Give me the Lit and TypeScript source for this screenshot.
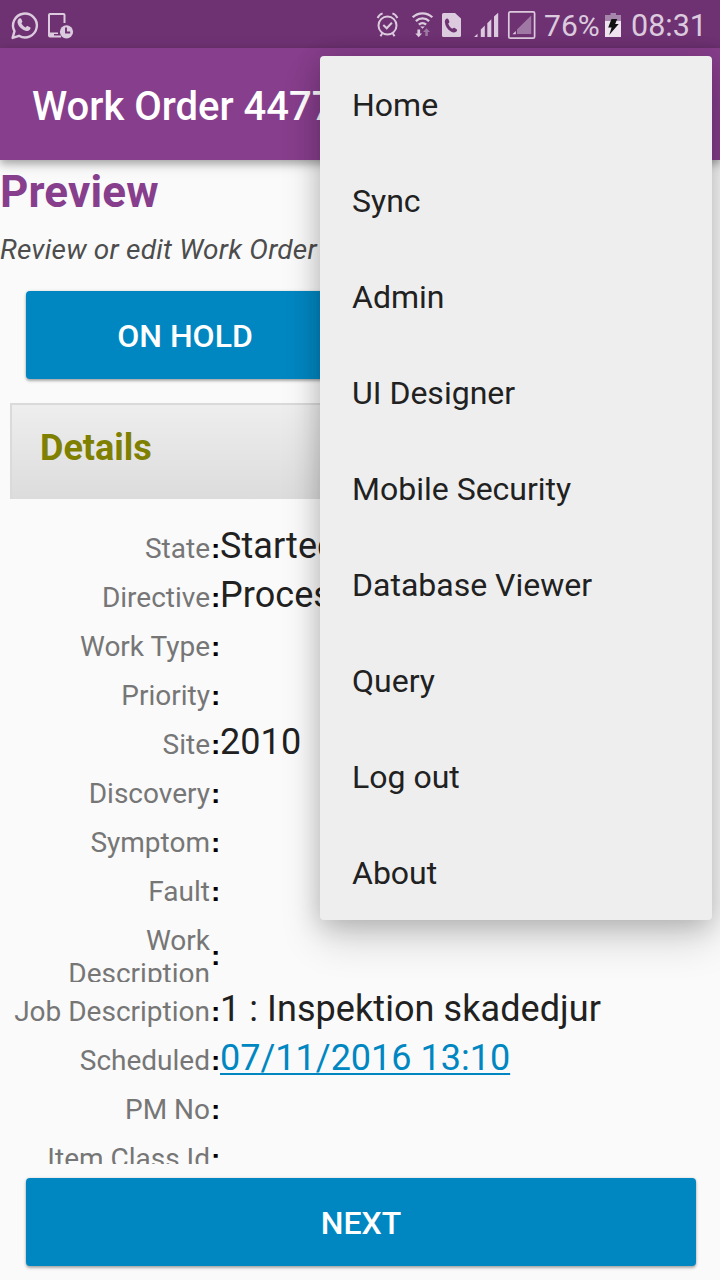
import { LitElement, html, css, nothing } from "lit";
import { customElement } from "lit/decorators.js";

interface Field {
  label: string;
  value?: string;
  link?: boolean;
  tall?: boolean;
}

const FIELDS: Field[] = [
  { label: "State", value: "Started" },
  { label: "Directive", value: "Process" },
  { label: "Work Type" },
  { label: "Priority" },
  { label: "Site", value: "2010" },
  { label: "Discovery" },
  { label: "Symptom" },
  { label: "Fault" },
  { label: "Work Description", tall: true },
  { label: "Job Description", value: "1 : Inspektion skadedjur" },
  { label: "Scheduled", value: "07/11/2016 13:10", link: true },
  { label: "PM No" },
  { label: "Item Class Id" },
];

const MENU = ["Home", "Sync", "Admin", "UI Designer", "Mobile Security", "Database Viewer", "Query", "Log out", "About"];

@customElement("status-bar")
class StatusBar extends LitElement {
  static styles = css`
    :host {
      display: flex;
      height: 48px;
      background: #6e3272;
      color: #dccbde;
      font: 30.5px/48px Roboto, sans-serif;
      white-space: nowrap;
    }
    svg { display: block; flex: none; }
    .spacer { flex: 1; }
    .percent { width: 62px; padding-top: 2px; font-size: 30px; }
    .time { width: 89px; padding-top: 2px; }
  `;
  render() {
    return html`
      <svg width="42" height="48" viewBox="0 0 42 48" fill="none" stroke="#dccbde" stroke-width="2.4">
        <path d="M12.6 37.9l1.9-6.7A11.9 11.9 0 1 1 19 35.8z" stroke-linejoin="round" />
        <path fill="#dccbde" stroke="none" d="M19.8 18.3c.6-.2 1.2 0 1.5.6l1 2.4c.2.5 0 .9-.9 2 .9 1.900 2.400 3.300 4.300 4.200 1-1.200 1.300-1.600 1.800-1.400l2.500 1.200c.6.3.7.600.5 1.300-.5 1.900-2.300 2.600-4.100 2.300-4.500-.8-8.400-4.700-8.900-8.600-.2-1.800 1-3.600 2.300-4z" />
      </svg>
      <svg width="38" height="48" viewBox="42 0 38 48">
        <path d="M64.500 23V15a1 1 0 0 0-1-1H50a1 1 0 0 0-1 1v20.500a1 1 0 0 0 1 1h11" fill="none" stroke="#dccbde" stroke-width="2" />
        <path d="M49 32.500h9v1.500h-4v2h6v1H49z" fill="#dccbde" />
        <circle cx="66.500" cy="31.800" r="6.600" fill="#dccbde" />
        <path d="M66 27.500v5h4.200" fill="none" stroke="#6e3272" stroke-width="1.900" />
      </svg>
      <div class="spacer"></div>
      <svg width="34" height="48" viewBox="371 0 34 48" fill="none" stroke="#dccbde" stroke-width="2">
        <circle cx="387.500" cy="25.500" r="9" />
        <path d="M383.300 25l3.400 3.300 5.200-5.600M377.600 18a8 8 0 0 1 5-4.600M397.400 18a8 8 0 0 0-5-4.600M382.300 33.300l-1.800 3M392.700 33.300l1.800 3" />
      </svg>
      <svg width="33" height="48" viewBox="405 0 33 48" fill="none" stroke="#dccbde" stroke-width="2.300">
        <path d="M412.700 17.300a14 14 0 0 1 19.600 0M415.900 21.100a9.500 9.500 0 0 1 13.200 0M418.900 24.700a5.200 5.200 0 0 1 7.200 0" />
        <path d="M420.200 26.500h4.600L422.500 28.800z" fill="#dccbde" stroke="none" />
        <path d="M417.400 29.500h2.700v4h2l-3.400 3.700-3.400-3.700h2.100z" fill="#dccbde" stroke="none" />
        <path d="M425.300 36v-4h-2.200l3.400-3.700 3.400 3.700h-2.100v4z" fill="#9f79a4" stroke="none" />
      </svg>
      <svg width="29" height="48" viewBox="438 0 29 48">
        <path d="M443.500 13H455l6 5.500v17a1.500 1.500 0 0 1-1.500 1.500h-16a1.500 1.500 0 0 1-1.500-1.500v-21a1.500 1.500 0 0 1 1.500-1.500z" fill="#dccbde" />
        <path fill="#6e3272" d="M446.300 18.700c1-.6 1.700-.3 2.100.5l.9 2.200c.3.800-.1 1.400-1.100 2.100.7 2.200 2 4 4.100 5.200 1.100-.9 1.700-1.200 2.400-.7l1.900 1.300c.7.600.6 1.500-.2 2.200-1.500 1.300-3.500 1.300-5.500.1-3.500-2.100-5.700-5.600-6-9.300-.1-1.600.2-2.900 1.400-3.600z" />
      </svg>
      <svg width="36" height="48" viewBox="467 0 36 48" fill="#dccbde">
        <path d="M474 37l3.500-3.200V37zM480.800 37v-7.500l4-3.900V37zM487.300 37V23.200l4-4V37zM494 37V16.600l4.200-3.900V37z" />
      </svg>
      <svg width="38" height="48" viewBox="503 0 38 48">
        <rect x="508.800" y="11.800" width="25.800" height="26.400" rx="1.500" fill="none" stroke="#dccbde" stroke-width="1.700" />
        <path d="M517 34V29.500L531.200 15.500V34z" fill="#9f79a4" />
        <path d="M512.500 34.200l3.300-3.300v3.300z" fill="#dccbde" />
      </svg>
      <span class="percent">&hairsp;76%</span>
      <svg width="28" height="48" viewBox="603 0 28 48">
        <path d="M605 15h5.500v-2h5.500v2h5v6h-16z" fill="#a685aa" />
        <path d="M605 21h16v16h-16z" fill="#eee3ef" />
        <path d="M611.500 19h5.700l-2 5h3.500l-9.500 11 2.400-7.500h-3.400z" fill="#111" />
      </svg>
      <span class="time">08:31</span>
    `;
  }
}

@customElement("field-row")
class FieldRow extends LitElement {
  static properties = { field: { attribute: false } };
  declare field: Field;
  static styles = css`
    .row {
      display: grid;
      grid-template-columns: 210px 10px 1fr;
      height: 49px;
      overflow: hidden;
      white-space: nowrap;
    }
    .tall { height: 71px; }
    .label {
      padding-top: 13px;
      font-size: 28px;
      line-height: 33px;
      text-align: right;
      color: #767676;
    }
    .tall .label { white-space: normal; padding-left: 50px; }
    .colon {
      padding: 13px 0 0 1px;
      font: bold 28px/33px "Liberation Sans", sans-serif;
      color: #000;
    }
    .tall .colon { padding-top: 28px; }
    .value { padding-top: 6px; font-size: 36px; line-height: 42px; color: #212121; }
    .text { letter-spacing: 0.07px; }
    .link { color: #0087c2; text-decoration: underline; text-decoration-thickness: 2px; text-underline-offset: 3px; text-decoration-skip-ink: none; }
  `;
  render() {
    const f = this.field;
    return html`<div class="row ${f.tall ? "tall" : ""}">
      <div class="label">${f.label}</div>
      <div class="colon">:</div>
      <div class="value">${f.value ? html`<span class=${f.link ? "link" : "text"}>${f.value}</span>` : nothing}</div>
    </div>`;
  }
}

@customElement("app-root")
class AppRoot extends LitElement {
  static styles = css`
    :host {
      display: flex;
      flex-direction: column;
      position: relative;
      width: 720px;
      height: 1280px;
      overflow: hidden;
      background: #fafafa;
      font-family: Roboto, sans-serif;
    }
    .bar {
      flex: none;
      height: 112px;
      box-sizing: border-box;
      padding: 3px 32px 0;
      background: #873e8c;
      box-shadow: 0 4px 8px rgba(0, 0, 0, 0.28), 0 3px 16px rgba(0, 0, 0, 0.1);
      color: #fff;
      font-size: 40px;
      font-weight: 500;
      line-height: 112px;
      white-space: nowrap;
    }
    .heading { margin: 0; padding-top: 6px; font-size: 44px; font-weight: 700; line-height: 52px; letter-spacing: 0.15px; color: #873e8c; }
    .hint { margin: 0; padding-top: 15px; font-size: 28px; font-style: italic; line-height: 33px; letter-spacing: 0.21px; color: #4d4d4d; white-space: nowrap; }
    .button {
      display: block;
      flex: none;
      height: 88px;
      padding: 2px 0 0;
      border: 0;
      border-radius: 4px;
      background: #0087c2;
      box-shadow: 0 2px 3px rgba(0, 0, 0, 0.3), 0 0 3px rgba(0, 0, 0, 0.12);
      color: #fff;
      font: 500 32px/86px Roboto, sans-serif;
      text-align: center;
    }
    .hold { width: 318px; margin: 25px 0 0 26px; }
    .next { margin: 14px 24px 14px 26px; }
    .panel {
      box-sizing: border-box;
      height: 96px;
      margin: 24px 10px 20px;
      padding: 0 28px;
      border: solid #dadada;
      border-width: 2px 2px 0;
      background: linear-gradient(#eee, #dcdcdc);
      color: #808000;
      font-size: 36px;
      font-weight: 700;
      line-height: 86px;
    }
    .fields { flex: 1; min-height: 0; overflow: hidden; }
    .menu {
      position: absolute;
      top: 56px;
      right: 8px;
      box-sizing: border-box;
      width: 392px;
      height: 864px;
      border-radius: 4px;
      background: #eee;
      box-shadow: 0 20px 40px rgba(0, 0, 0, 0.16), 0 4px 26px rgba(0, 0, 0, 0.19);
      color: #212121;
      font-size: 32px;
    }
    .item { height: 96px; padding-left: 32px; line-height: 98px; }
  `;
  render() {
    return html`
      <status-bar></status-bar>
      <header class="bar">Work Order 4477</header>
      <h1 class="heading">Preview</h1>
      <p class="hint">Review or edit Work Order</p>
      <button class="button hold">ON HOLD</button>
      <div class="panel">Details</div>
      <div class="fields">${FIELDS.map((f) => html`<field-row .field=${f}></field-row>`)}</div>
      <button class="button next">NEXT</button>
      <nav class="menu">${MENU.map((m) => html`<div class="item">${m}</div>`)}</nav>
    `;
  }
}
